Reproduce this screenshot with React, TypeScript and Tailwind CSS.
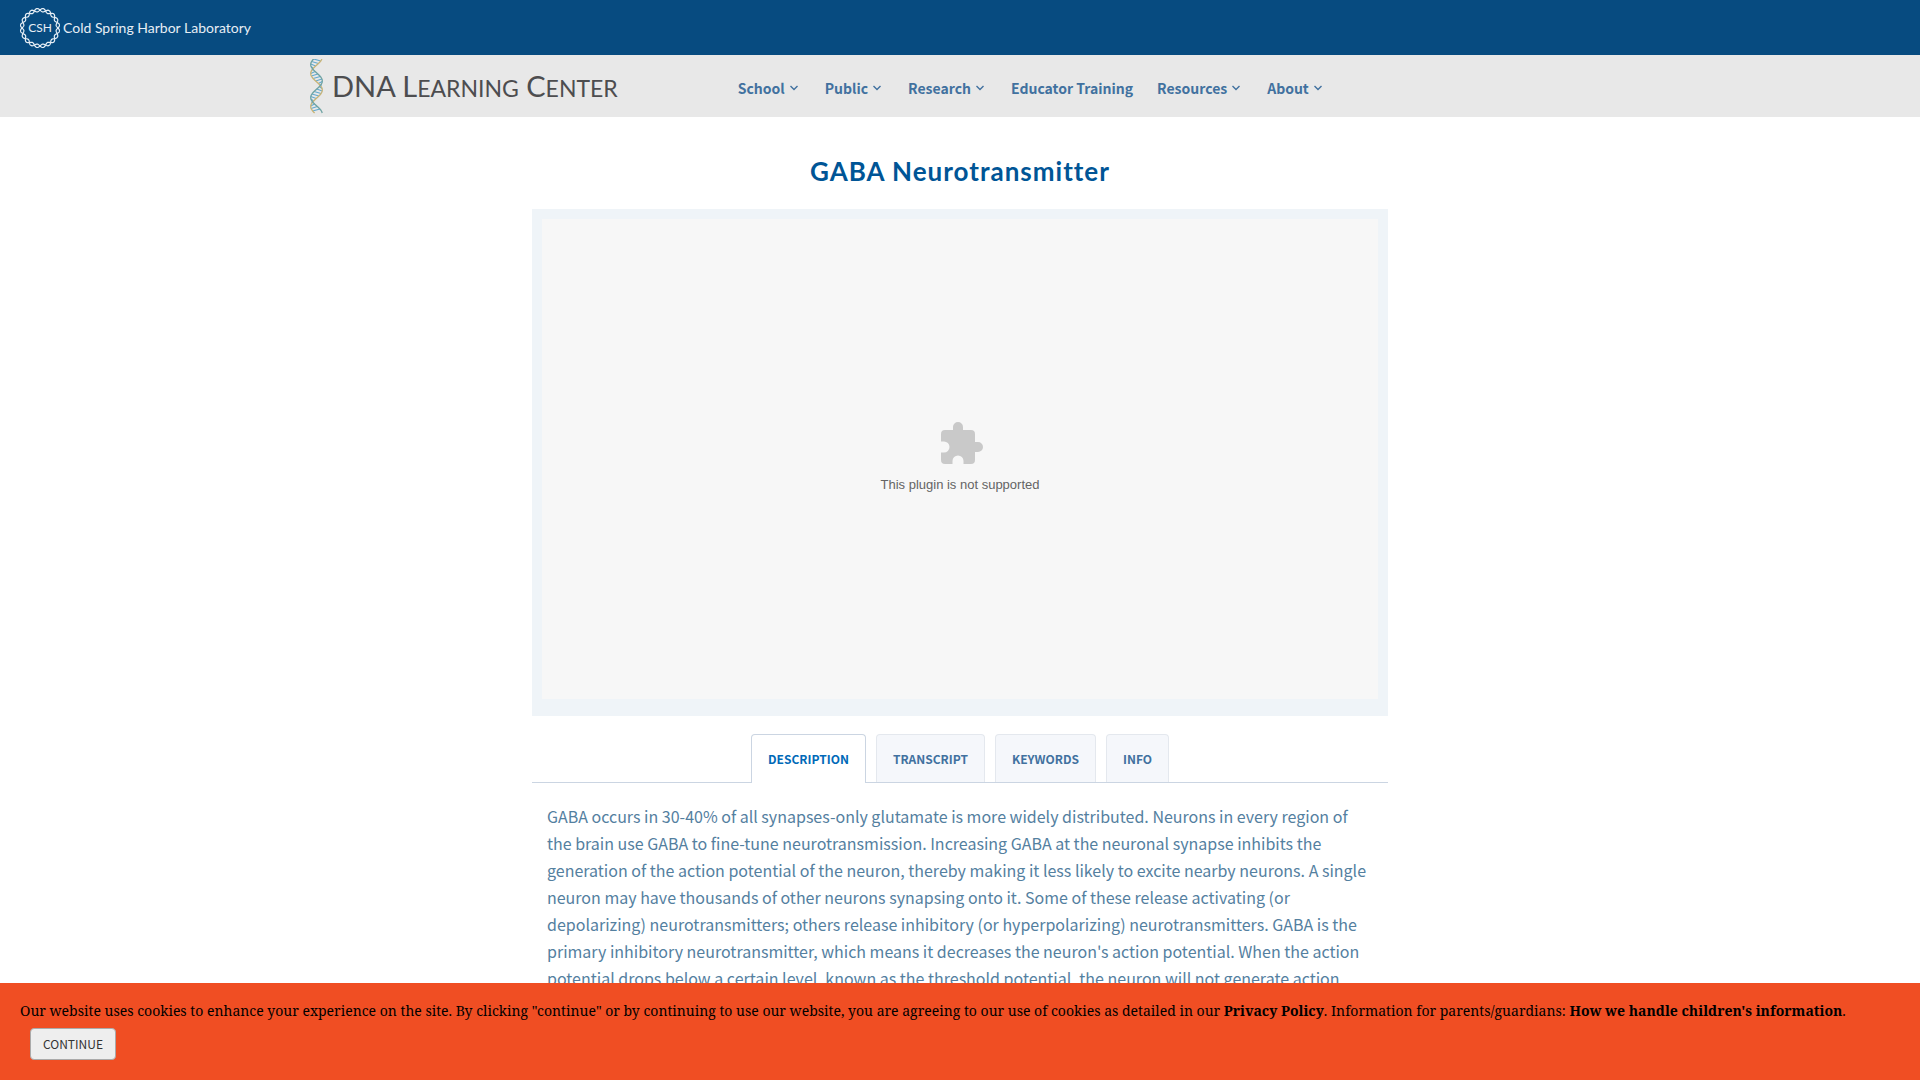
import { useState } from "react";

const sans = "font-['Noto_Sans_CJK_SC',sans-serif]";

const navItems = [
  { label: "School", menu: true },
  { label: "Public", menu: true },
  { label: "Research", menu: true },
  { label: "Educator Training", menu: false },
  { label: "Resources", menu: true },
  { label: "About", menu: true },
];

const tabs = ["Description", "Transcript", "Keywords", "Info"];

function ringStrand(phase: number) {
  const pts: string[] = [];
  for (let i = 0; i <= 360; i += 2) {
    const a = (i * Math.PI) / 180;
    const r = 18 + 1.7 * Math.sin(10 * a + phase);
    pts.push(`${(20 + r * Math.cos(a)).toFixed(2)},${(20 + r * Math.sin(a)).toFixed(2)}`);
  }
  return pts.join(" ");
}

function RingLogo() {
  return (
    <svg viewBox="0 0 40 40" className="col-start-1 row-start-1 size-10" fill="none" stroke="#e6eef5" strokeWidth="1.2" aria-hidden="true">
      <polyline points={ringStrand(0)} />
      <polyline points={ringStrand(Math.PI)} />
    </svg>
  );
}

const helixX = (y: number, shift: number) => 6.5 + 5.8 * Math.cos(((y - shift) * 2 * Math.PI) / 33);

function helixStrand(shift: number) {
  const pts: string[] = [];
  for (let y = 0; y <= 54; y += 1) pts.push(`${helixX(y, shift).toFixed(2)},${y}`);
  return pts.join(" ");
}

function HelixLogo() {
  const rungs = [];
  for (let y = 1; y <= 53; y += 2.5) {
    rungs.push(<line key={y} x1={helixX(y - 1, 22)} y1={y - 1} x2={helixX(y + 1, 31)} y2={y + 1} />);
  }
  return (
    <svg viewBox="0 0 13 55" className="h-[55px] w-[13px]" fill="none" aria-hidden="true">
      <g stroke="#62a9cf" strokeWidth="1.1">{rungs}</g>
      <polyline points={helixStrand(31)} stroke="#c9b477" strokeWidth="1.3" />
      <polyline points={helixStrand(22)} stroke="#6fa3a3" strokeWidth="1.3" />
    </svg>
  );
}

function Caret() {
  return (
    <svg viewBox="0 0 12 12" className="size-3" fill="none" stroke="currentColor" strokeWidth="1.4" aria-hidden="true">
      <path d="M1.500 4 L5 7.500 L8.500 4" />
    </svg>
  );
}

export default function App() {
  const [active, setActive] = useState("Description");
  const [cookies, setCookies] = useState(true);

  return (
    <div className={`min-h-screen bg-white ${sans}`}>
      <header>
        <div className="flex h-[55px] items-center bg-[#074b80] px-5">
          <a href="#" className="flex items-center gap-[3px] text-[#e6eef5] font-['Lato',sans-serif]">
            <span className="grid place-items-center">
              <RingLogo />
              <span className="col-start-1 row-start-1 text-[12px] leading-none">CSH</span>
            </span>
            <span className="text-[14px] leading-none">Cold Spring Harbor Laboratory</span>
          </a>
        </div>
        <div className="bg-[#e8e8e8]">
          <div className="mx-auto flex h-[62px] max-w-[1300px] items-center">
            <a href="#" className="flex items-center gap-[9px] text-[#4d4d4f] font-['Lato',sans-serif]">
              <HelixLogo />
              <span className="pb-0.5 text-[29px] leading-none whitespace-nowrap">
                DNA L<span className="text-[23px]">EARNING</span> C<span className="text-[23px]">ENTER</span>
              </span>
            </a>
            <nav className="ml-[120px] flex items-center gap-6 pt-1 text-[14px] font-bold text-[#41719f]">
              {navItems.map((item) => (
                <a key={item.label} href="#" className="flex items-center gap-1 whitespace-nowrap">
                  {item.label}
                  {item.menu && <Caret />}
                </a>
              ))}
            </nav>
          </div>
        </div>
      </header>

      <main className="mx-auto max-w-[856px]">
        <h1 className="mt-[36px] text-center text-[26px] leading-[36px] font-bold tracking-[1px] text-[#005596] font-['Lato',sans-serif]">
          GABA Neurotransmitter
        </h1>
        <div className="mt-5 bg-[#eff4f8] px-[10px] pt-[10px] pb-[17px]">
          <div className="flex h-[480px] flex-col items-center justify-center gap-[13px] bg-[#f7f7f7] pb-1">
            <svg viewBox="0 0 42 42" className="ml-1 size-[42px]" fill="#c9c9c9" aria-hidden="true">
              <path d="M38 20h-4V12a4 4 0 0 0-4-4h-8V5a5 5 0 0 0-10 0v3H4a4 4 0 0 0-4 4v7.500h3a5.500 5.500 0 0 1 0 11H0v7.500a4 4 0 0 0 4 4h7.500v-3a5.500 5.500 0 0 1 11 0v3H30a4 4 0 0 0 4-4v-8h3a5 5 0 0 0 0-10z" />
            </svg>
            <p className="text-[13px] leading-4 text-[#646464] font-['Liberation_Sans',sans-serif]">This plugin is not supported</p>
          </div>
        </div>

        <div role="tablist" className="mt-[18px] flex justify-center gap-[10px] border-b border-[#cbd5e2]">
          {tabs.map((tab) => (
            <button
              key={tab}
              role="tab"
              aria-selected={active === tab}
              onClick={() => setActive(tab)}
              className={
                active === tab
                  ? "-mb-px h-[49px] rounded-t border border-b-0 border-[#cbd5e2] bg-white px-4 text-[12px] font-bold uppercase text-[#0069b8]"
                  : "h-12 rounded-t border border-b-0 border-[#e4e8ee] bg-[#f5f7fb] px-4 text-[12px] font-bold uppercase text-[#41719f]"
              }
            >
              {tab}
            </button>
          ))}
        </div>

        <p role="tabpanel" className="px-[15px] pt-5 text-[16px] leading-[27px] text-[#54809f]">
          GABA occurs in 30-40% of all synapses-only glutamate is more widely distributed. Neurons in every region of the
          brain use GABA to fine-tune neurotransmission. Increasing GABA at the neuronal synapse inhibits the generation
          of the action potential of the neuron, thereby making it less likely to excite nearby neurons. A single neuron
          may have thousands of other neurons synapsing onto it. Some of these release activating (or depolarizing)
          neurotransmitters; others release inhibitory (or hyperpolarizing) neurotransmitters. GABA is the primary
          inhibitory neurotransmitter, which means it decreases the neuron's action potential. When the action potential
          drops below a certain level, known as the threshold potential, the neuron will not generate action
        </p>
      </main>

      {cookies && (
        <div className="fixed inset-x-0 bottom-0 bg-[#f04e23] px-5 pt-4 pb-5 text-[14px] leading-6 text-black font-['Noto_Serif','Droid_Serif','DejaVu_Serif',serif]">
          <p>
            Our website uses cookies to enhance your experience on the site. By clicking "continue" or by continuing to
            use our website, you are agreeing to our use of cookies as detailed in our{" "}
            <a href="#" className="font-bold">Privacy Policy</a>. Information for parents/guardians:{" "}
            <a href="#" className="font-bold">How we handle children's information</a>.
          </p>
          <button
            onClick={() => setCookies(false)}
            className="mt-[5px] ml-[10px] block h-8 rounded border border-[#aaaaaa] bg-[#eeeeee] px-3 text-[12px] uppercase text-[#333333] font-['Noto_Sans_CJK_SC',sans-serif]"
          >
            Continue
          </button>
        </div>
      )}
    </div>
  );
}
